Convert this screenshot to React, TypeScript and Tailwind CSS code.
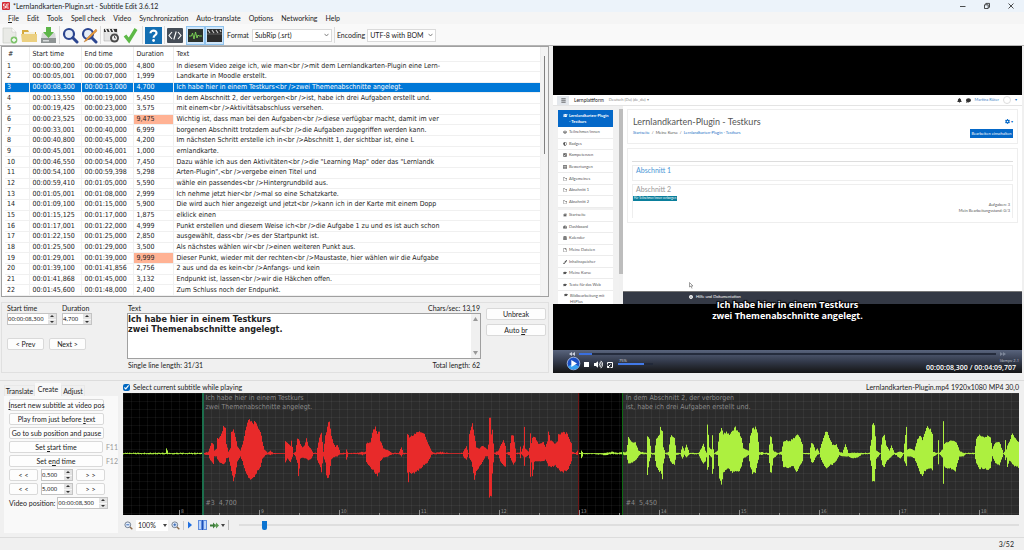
import React from "react";
import {
  FaGraduationCap, FaUsers, FaShieldAlt, FaCheckSquare, FaTable, FaRegFolder, FaHome, FaTachometerAlt,
  FaCalendarAlt, FaRegFile, FaPaintBrush, FaBell, FaComment, FaCog, FaBars, FaInfoCircle, FaVolumeUp,
} from "react-icons/fa";

type Row = [string, string, string, string];

const rows: Row[] = [
  ["00:00:00,200", "00:00:05,000", "4,800", "In diesem Video zeige ich, wie man<br />mit dem Lernlandkarten-Plugin eine Lern-"],
  ["00:00:05,001", "00:00:07,000", "1,999", "Landkarte in Moodle erstellt."],
  ["00:00:08,300", "00:00:13,000", "4,700", "Ich habe hier in einem Testkurs<br />zwei Themenabschnitte angelegt."],
  ["00:00:13,550", "00:00:19,000", "5,450", "In dem Abschnitt 2, der verborgen<br />ist, habe ich drei Aufgaben erstellt und."],
  ["00:00:19,425", "00:00:23,000", "3,575", "mit einem<br />Aktivitätsabschluss versehen."],
  ["00:00:23,525", "00:00:33,000", "9,475", "Wichtig ist, dass man bei den Aufgaben<br />diese verfügbar macht, damit im ver"],
  ["00:00:33,001", "00:00:40,000", "6,999", "borgenen Abschnitt trotzdem auf<br />die Aufgaben zugegriffen werden kann."],
  ["00:00:40,800", "00:00:45,000", "4,200", "Im nächsten Schritt erstelle ich in<br />Abschnitt 1, der sichtbar ist, eine L"],
  ["00:00:45,001", "00:00:46,001", "1,000", "ernlandkarte."],
  ["00:00:46,550", "00:00:54,000", "7,450", "Dazu wähle ich aus den Aktivitäten<br />die \"Learning Map\" oder das \"Lernlandk"],
  ["00:00:54,100", "00:00:59,398", "5,298", "Arten-Plugin\",<br />vergebe einen Titel und"],
  ["00:00:59,410", "00:01:05,000", "5,590", "wähle ein passendes<br />Hintergrundbild aus."],
  ["00:01:05,001", "00:01:08,000", "2,999", "Ich nehme jetzt hier<br />mal so eine Schatzkarte."],
  ["00:01:09,100", "00:01:15,000", "5,900", "Die wird auch hier angezeigt und jetzt<br />kann ich in der Karte mit einem Dopp"],
  ["00:01:15,125", "00:01:17,000", "1,875", "elklick einen"],
  ["00:01:17,001", "00:01:22,000", "4,999", "Punkt erstellen und diesem Weise ich<br />die Aufgabe 1 zu und es ist auch schon"],
  ["00:01:22,150", "00:01:25,000", "2,850", "ausgewählt, dass<br />es der Startpunkt ist."],
  ["00:01:25,500", "00:01:29,000", "3,500", "Als nächstes wählen wir<br />einen weiteren Punkt aus."],
  ["00:01:29,001", "00:01:39,000", "9,999", "Dieser Punkt, wieder mit der rechten<br />Maustaste, hier wählen wir die Aufgabe"],
  ["00:01:39,100", "00:01:41,856", "2,756", "2 aus und da es kein<br />Anfangs- und kein"],
  ["00:01:41,868", "00:01:45,000", "3,132", "Endpunkt ist, lassen<br />wir die Häkchen offen."],
  ["00:01:45,600", "00:01:48,000", "2,400", "Zum Schluss noch der Endpunkt."],
];

// Waveform envelope: x position, height above and below the centre line.
const envelope: number[] = [
  123,1,1, 150,1,1, 165,1,1, 166,5,1, 168,1,1, 185,1,1, 203,1,1, 208,2,2, 209,5,5, 211,11,8, 213,9,10, 214,3,3, 216,5,3,
  217,15,6, 219,16,9, 222,22,10, 223,27,11, 225,26,9, 226,10,5, 228,2,4, 230,5,12, 231,22,18, 233,24,28, 235,17,20, 237,7,8,
  240,3,3, 242,9,8, 244,18,15, 247,33,22, 249,35,26, 251,32,27, 254,31,23, 257,28,18, 260,22,13, 262,12,5, 264,4,3, 267,1,1,
  270,3,2, 273,1,1, 284,0,0, 285,12,9, 287,11,5, 290,8,9, 291,13,6, 293,1,1, 295,2,3, 297,16,10, 298,15,24, 300,10,5, 302,6,4,
  304,8,5, 306,15,5, 308,8,7, 311,4,5, 313,1,1, 316,1,1, 317,6,7, 320,20,14, 321,22,18, 323,2,3, 325,18,9, 326,22,22, 328,31,26,
  329,31,22, 330,24,12, 331,18,6, 333,10,4, 335,7,3, 337,9,3, 340,1,1, 345,1,1, 346,4,6, 348,1,1, 356,1,1, 362,2,2, 365,2,1,
  366,10,9, 370,12,14, 373,24,17, 375,26,20, 377,20,22, 379,22,19, 380,13,8, 383,5,4, 388,3,3, 392,1,1, 398,1,1, 401,6,3,
  403,1,1, 406,1,1, 407,19,20, 408,18,29, 409,16,20, 413,19,20, 419,22,16, 423,21,12, 427,12,9, 431,3,2, 434,1,1, 440,2,1,
  455,0,0, 462,1,1, 464,4,5, 466,7,6, 468,1,1, 469,20,5, 471,28,8, 472,32,14, 474,18,26, 476,6,18, 479,5,13, 482,8,9,
  485,6,3, 487,4,3, 488,9,6, 489,38,43, 490,35,43, 491,20,42, 492,24,20, 493,10,9, 494,1,1, 498,3,2, 500,8,8, 503,13,12,
  505,8,14, 506,1,1, 509,2,2, 511,18,7, 513,19,11, 515,5,8, 516,1,1, 519,1,1, 520,7,5, 521,2,1, 523,8,3, 524,26,12, 525,5,4,
  528,2,2, 529,6,5, 530,20,24, 531,11,9, 532,15,24, 534,17,8, 538,10,8, 543,11,8, 545,7,6, 547,12,10, 548,23,13, 550,13,14,
  555,10,12, 557,12,14, 558,20,16, 562,21,19, 567,20,17, 571,10,8, 572,2,1, 575,1,1, 577,3,2, 578,1,1, 580,1,1, 581,3,5,
  583,1,1, 592,0,1, 605,1,2, 612,2,1, 618,1,1, 626,2,2, 628,16,10, 630,13,10, 632,12,9, 635,11,7, 638,3,3, 641,2,1, 646,1,1,
  647,18,21, 649,15,8, 651,1,1, 654,1,2, 656,15,13, 659,18,19, 660,26,17, 662,22,26, 663,6,10, 665,1,1, 668,2,2, 670,17,8,
  672,18,11, 674,15,11, 676,1,2, 680,1,1, 682,7,5, 684,3,2, 686,9,4, 689,1,1, 698,1,1, 701,5,7, 703,10,10, 705,3,8, 706,1,4,
  707,30,17, 708,20,14, 709,6,2, 711,4,4, 712,18,20, 713,4,16, 714,1,1, 717,3,2, 719,20,24, 721,26,32, 723,20,20, 726,21,16,
  729,19,16, 732,23,19, 735,26,18, 738,22,19, 741,16,13, 743,5,5, 748,3,2, 750,18,14, 752,25,20, 755,26,19, 757,21,10,
  759,2,2, 765,1,1, 768,1,2, 770,18,18, 771,17,20, 773,3,5, 778,1,1, 781,2,2, 783,12,13, 787,13,14, 790,13,14, 793,15,13,
  796,19,19, 799,17,13, 802,9,8, 803,1,1, 809,1,1, 811,11,9, 813,9,9, 815,3,4, 817,5,2, 819,1,1, 821,10,7, 823,16,11,
  826,23,16, 829,16,12, 832,9,11, 836,9,7, 839,2,2, 842,1,3, 845,9,3, 848,1,3, 852,1,5, 857,1,4, 862,1,1, 869,1,1, 871,14,13,
  872,30,28, 874,30,28, 876,3,5, 880,1,1, 882,17,12, 884,18,13, 886,8,8, 889,3,5, 891,8,3, 894,1,1, 900,2,5, 903,1,1,
  904,10,8, 906,27,12, 907,4,3, 910,5,3, 914,3,5, 917,15,12, 920,18,21, 922,13,22, 924,20,18, 926,27,16, 930,25,15, 932,20,16,
  933,2,3, 937,1,1, 938,13,11, 939,1,1, 942,4,4, 943,33,32, 944,10,14, 950,13,15, 955,12,18, 957,9,10, 959,3,3, 963,1,3,
  966,1,1, 974,1,1, 976,15,10, 979,18,15, 983,16,15, 988,18,16, 990,16,14, 992,5,3, 995,11,10, 999,12,12, 1001,6,6, 1003,1,1,
  1004,2,2, 1005,13,7, 1006,4,4, 1007,8,14, 1009,12,7, 1012,21,11, 1014,17,13, 1019,10,14,
];

function wavePath(from: number, to: number): string {
  let d = "";
  let k = 0;
  for (let x = from; x < to; x++) {
    while (k + 3 < envelope.length - 3 && envelope[k + 3] <= x) k += 3;
    const t = Math.min(1, Math.max(0, (x - envelope[k]) / (envelope[k + 3] - envelope[k])));
    const n = Math.abs(Math.sin(x * 12.9898) * 43758.5453) % 1;
    const m = Math.abs(Math.sin(x * 78.233) * 12543.123) % 1;
    const up = envelope[k + 1] * (1 - t) + envelope[k + 4] * t;
    const down = envelope[k + 2] * (1 - t) + envelope[k + 5] * t;
    const top = Math.max(0.4, up * (0.93 + n * 0.12) - (up < 3 ? 0.7 - n * 0.6 : 0));
    const bottom = Math.max(0.4, down * (0.93 + m * 0.12) - (down < 3 ? 0.7 - m * 0.6 : 0));
    d += `M${x - 122.5} ${(60.5 - top).toFixed(1)}V${(60.5 + bottom).toFixed(1)}`;
  }
  return d;
}

const openSans = "font-['Open_Sans','Noto_Sans',sans-serif]";
const lato = "font-['Lato','Open_Sans',sans-serif]";
const tahoma = "font-['DejaVu_Sans_Condensed','DejaVu_Sans',sans-serif]";

function Btn({ children, className = "" }: { children: React.ReactNode; className?: string }) {
  return (
    <button className={`flex h-[12px] items-center justify-center whitespace-nowrap rounded-[2px] border border-[#d9d9d9] bg-[#fdfdfd] leading-none ${className}`}>
      <span>{children}</span>
    </button>
  );
}

function Spin({ value, label, className = "" }: { value: string; label: string; className?: string }) {
  return (
    <div className={`flex h-[12px] border border-[#c4c4c4] bg-white ${className}`}>
      <input aria-label={label} defaultValue={value} className={`w-0 min-w-0 flex-1 bg-transparent text-[6px] leading-none text-black outline-none ${openSans}`} />
      <div className="flex w-[8px] flex-col bg-[#e3e3e3]">
        <button aria-label={`${label} up`} className="flex flex-1 items-center justify-center">
          <svg width="4" height="2" viewBox="0 0 4 2"><path d="M0 2L2 0L4 2Z" fill="#333" /></svg>
        </button>
        <button aria-label={`${label} down`} className="flex flex-1 items-center justify-center border-t border-[#f6f6f6]">
          <svg width="4" height="2" viewBox="0 0 4 2"><path d="M0 0L2 2L4 0Z" fill="#333" /></svg>
        </button>
      </div>
    </div>
  );
}

function Sep() {
  return <span className="h-[18px] w-px shrink-0 bg-[#dcdcdc]" />;
}

function Tool({ label, children, on = false }: { label: string; children: React.ReactNode; on?: boolean }) {
  return (
    <button aria-label={label} className={`flex h-[19px] shrink-0 items-center justify-center ${on ? "w-[19px] border border-[#8fc3ee] bg-[#cfe6fa]" : "w-[17px]"}`}>
      <svg width="17" height="17" viewBox="0 0 17 17">{children}</svg>
    </button>
  );
}

function TitleBar() {
  return (
    <header className="flex h-[12px] items-center bg-[#ecf3fa] pl-[2px]">
      <svg width="8" height="8" viewBox="0 0 16 16">
        <rect width="16" height="16" rx="2" fill="#d32a35" />
        <path d="M7 4H3V8H7V12H2.5M14 4H9.5V12H14M9.5 8H13" fill="none" stroke="#fff" strokeWidth="1.6" />
      </svg>
      <h1 className="ml-[3px] flex-1 whitespace-nowrap leading-none">*Lernlandkarten-Plugin.srt - Subtitle Edit 3.6.12</h1>
      <div className="flex items-center gap-[16px] pr-[9px]">
        <button aria-label="Minimize"><svg width="8" height="8" viewBox="0 0 8 8"><path d="M1 4.500H6.500" stroke="#222" strokeWidth=".8" /></svg></button>
        <button aria-label="Restore"><svg width="8" height="8" viewBox="0 0 8 8"><path d="M1.500 2.800H5.200V6.500H1.500ZM2.800 2.500V1.400H6.500V5.300H5.500" fill="none" stroke="#222" strokeWidth=".8" /></svg></button>
        <button aria-label="Close"><svg width="8" height="8" viewBox="0 0 8 8"><path d="M1.500 1.500L6.500 6.500M6.500 1.500L1.500 6.500" stroke="#222" strokeWidth=".8" /></svg></button>
      </div>
    </header>
  );
}

function MenuBar() {
  return (
    <nav className="flex h-[12px] items-center gap-[8px] bg-[#f5f5f5] pl-[8px] leading-none">
      <button><u>F</u>ile</button>
      {["Edit", "Tools", "Spell check", "Video", "Synchronization", "Auto-translate", "Options", "Networking", "Help"].map((m) => (
        <button key={m} className="whitespace-nowrap">{m}</button>
      ))}
    </nav>
  );
}

function ToolBar() {
  return (
    <div className="flex h-[22px] items-center border-b border-[#b5b5b5] bg-[#f9f9f9] pl-[2px] pt-[1px]">
      <div className="flex items-center gap-[2px]">
        <Tool label="New">
          <path d="M1 1H10L14 5V16H1Z" fill="#e9eae6" stroke="#c4c6c0" strokeWidth=".6" />
          <path d="M10 1V5H14" fill="#fff" stroke="#c4c6c0" strokeWidth=".5" />
          <circle cx="12" cy="13" r="3.400" fill="#7fc46c" />
          <path d="M12 11V15M10 13H14" stroke="#fff" strokeWidth="1.300" />
        </Tool>
        <Tool label="Open">
          <path d="M1 3H7L8 5H15V15H1Z" fill="#d5a93d" />
          <path d="M3 5H14V9H3Z" fill="#f4f0df" />
          <path d="M0 7H16L16 15H1Z" fill="#ecd080" />
        </Tool>
        <Tool label="Save">
          <path d="M2 6H15L16 12H1Z" fill="#d6d8d8" />
          <path d="M1 11H16V16H1Z" fill="#8e9494" />
          <path d="M3 13H9V14.500H3Z" fill="#d9dddd" />
          <path d="M6 0H11V5H14L8.500 11L3 5H6Z" fill="#5cb548" />
        </Tool>
      </div>
      <div className="ml-[2px] flex items-center gap-[2px]">
        <Sep />
        <Tool label="Find">
          <circle cx="7" cy="7" r="5" fill="#e6edf7" stroke="#2b4590" strokeWidth="2.200" />
          <path d="M10.800 10.800L15 15" stroke="#2b4590" strokeWidth="3" strokeLinecap="round" />
        </Tool>
        <Tool label="Replace">
          <circle cx="7" cy="7" r="5" fill="#e6edf7" stroke="#2b4590" strokeWidth="2.200" />
          <path d="M10.800 10.800L15 15" stroke="#2b4590" strokeWidth="3" strokeLinecap="round" />
          <path d="M15 2L5 12L3 15L6 13.500L16 4Z" fill="#e79a3c" stroke="#a8682a" strokeWidth=".4" />
        </Tool>
        <Sep />
        <Tool label="Visual sync">
          <path d="M1 2H14V14H1Z" fill="#e4e4e4" stroke="#a5a5a5" strokeWidth=".5" />
          <path d="M1 2H14V5H1Z" fill="#333" />
          <path d="M2.500 2L4 5M6 2L7.500 5M9.500 2L11 5" stroke="#f5f5f5" strokeWidth="1.500" />
          <circle cx="11.500" cy="11" r="4.500" fill="#4a4a4a" />
          <circle cx="11.500" cy="11" r="2.500" fill="#f0f0f0" />
          <path d="M11.500 9V11H13" stroke="#333" fill="none" strokeWidth=".8" />
        </Tool>
        <Tool label="Fix common errors">
          <path d="M3 8.500L7 13.500L14 2" fill="none" stroke="#5db947" strokeWidth="3.400" />
        </Tool>
      </div>
      <div className="ml-[3px] flex items-center gap-[2px]">
        <Sep />
        <Tool label="Help">
          <rect width="17" height="17" fill="#136fb3" />
          <path d="M5.500 6.300C5.500 2.600 11.700 2.800 11.500 6.200C11.400 8.200 8.600 8.400 8.600 10.700" fill="none" stroke="#fff" strokeWidth="2.200" />
          <circle cx="8.600" cy="13.500" r="1.400" fill="#fff" />
        </Tool>
        <Sep />
        <Tool label="Source view">
          <rect y="1" width="16" height="15" rx="1" fill="#454d57" />
          <path d="M5 5L2 8.500L5 12M11 5L14 8.500L11 12M9.200 4.500L6.800 12.500" fill="none" stroke="#fff" strokeWidth="1.100" />
        </Tool>
        <div className="flex">
          <Tool label="Toggle waveform" on>
            <rect x="1" y="2" width="15" height="13" fill="#2c322c" />
            <path d="M2 9H4.500L5.500 6L7 12L8.500 5L10 11L11 8L12 9H15" fill="none" stroke="#7ed957" strokeWidth=".9" />
          </Tool>
          <Tool label="Toggle video" on>
            <rect x="1" y="2" width="15" height="13" fill="#2d2d2d" />
            <path d="M2 3L4 6M6 3L8 6M10 3L12 6M14 3L15 5" stroke="#c8c8c8" strokeWidth="1.200" />
            <path d="M1 7H16" stroke="#8b8b8b" strokeWidth=".6" />
          </Tool>
        </div>
      </div>
      <label className="ml-[3px] flex items-center gap-[3px] whitespace-nowrap">
        Format
        <span className="flex h-[13px] w-[80px] items-center border border-[#dadada] bg-white px-[2px]">
          <select className="min-w-0 flex-1 appearance-none bg-transparent leading-none outline-none"><option>SubRip (.srt)</option></select>
          <Chevron />
        </span>
      </label>
      <span className="ml-[2px] mr-[2px] h-[16px] w-px bg-[#dcdcdc]" />
      <label className="flex items-center gap-[2px] whitespace-nowrap">
        Encoding
        <span className="flex h-[13px] w-[69px] items-center border border-[#dadada] bg-white px-[2px]">
          <select className="min-w-0 flex-1 appearance-none bg-transparent leading-none outline-none"><option>UTF-8 with BOM</option></select>
          <Chevron />
        </span>
      </label>
    </div>
  );
}

function Chevron() {
  return <svg width="5" height="4" viewBox="0 0 5 4" className="shrink-0"><path d="M.5 .8L2.500 3L4.500 .8" fill="none" stroke="#666" strokeWidth=".8" /></svg>;
}

function SubtitleList() {
  return (
    <section className={`flex border border-[#a0a0a0] bg-white pl-[3px] text-[7px] ${tahoma}`}>
      <table className="h-[249px] min-w-0 flex-1 table-fixed border-collapse text-left leading-none">
        <colgroup>
          <col className="w-[24px]" /><col className="w-[52px]" /><col className="w-[52px]" /><col className="w-[40px]" /><col />
        </colgroup>
        <thead>
          <tr className="h-[14px]">
            {["#", "Start time", "End time", "Duration", "Text"].map((h) => (
              <th key={h} className="whitespace-nowrap border-r border-[#ececec] px-[3px] pb-0 pt-[2px] font-normal">{h}</th>
            ))}
          </tr>
        </thead>
        <tbody>
          {rows.map((r, i) => (
            <tr key={i} className={i === 2 ? "bg-[#0078d7] text-white" : ""}>
              <td className="border border-[#f0f0f0] border-l-0 px-[2px] py-0">{i + 1}</td>
              <td className="border border-[#f0f0f0] px-[3px] py-0">{r[0]}</td>
              <td className="border border-[#f0f0f0] px-[3px] py-0">{r[1]}</td>
              <td className={`border border-[#f0f0f0] px-[3px] py-0 ${i === 5 || i === 18 ? "bg-[#ffb294]" : ""}`}>{r[2]}</td>
              <td className="whitespace-nowrap border border-[#f0f0f0] px-[3px] py-0">{r[3]}</td>
            </tr>
          ))}
        </tbody>
      </table>
      <div className="flex w-[7px] justify-center bg-[#f3f3f3] pt-[9px]">
        <span className="h-[98px] w-px bg-[#808080]" />
      </div>
    </section>
  );
}

function EditPanel() {
  return (
    <section className="flex gap-[5px] border border-[#e0e0e0] py-[1px] pl-[5px] pr-[2px]">
      <div className="w-[115px]">
        <div className="flex gap-[5px]">
          <div className="w-[50px]"><div className="h-[9px]">Start time</div><Spin label="Start time" value="00:00:08,300" /></div>
          <div className="w-[30px]"><div className="h-[9px]">Duration</div><Spin label="Duration" value="4,700" /></div>
        </div>
        <div className="mt-[13px] flex gap-[5px]">
          <Btn className="w-[37px]">&lt; Prev</Btn>
          <Btn className="w-[37px]">Next &gt;</Btn>
        </div>
      </div>
      <div className="min-w-0 flex-1">
        <div className="flex h-[9px] justify-between px-[1px]"><label htmlFor="subtitle-text">Text</label><span>Chars/sec: 13,19</span></div>
        <div className="flex h-[46px] border border-[#a0a0a0] bg-white">
          <textarea id="subtitle-text" defaultValue={"Ich habe hier in einem Testkurs\nzwei Themenabschnitte angelegt."} className={`min-w-0 flex-1 resize-none overflow-hidden text-[9px] font-bold leading-[10px] outline-none ${tahoma}`} />
          <div className="flex w-[9px] flex-col items-center justify-between bg-[#f0f0f0] py-[3px]">
            <svg width="5" height="4" viewBox="0 0 5 4"><path d="M0 4L2.500 0L5 4Z" fill="#999" /></svg>
            <svg width="5" height="4" viewBox="0 0 5 4"><path d="M0 0L2.500 4L5 0Z" fill="#999" /></svg>
          </div>
        </div>
        <div className="flex h-[12px] items-center justify-between px-[1px]"><span>Single line length: 31/31</span><span>Total length: 62</span></div>
      </div>
      <div className="flex w-[60px] flex-col gap-[4px] pt-[4px]">
        <Btn>Unbreak</Btn>
        <Btn>Auto <u>b</u>r</Btn>
      </div>
    </section>
  );
}

const nav1: [React.ReactNode, string][] = [
  [<FaUsers />, "Teilnehmer/innen"], [<FaShieldAlt />, "Badges"], [<FaCheckSquare />, "Kompetenzen"], [<FaTable />, "Bewertungen"],
  [<FaRegFolder />, "Allgemeines"], [<FaRegFolder />, "Abschnitt 1"], [<FaRegFolder />, "Abschnitt 2"],
];
const nav2: [React.ReactNode, string][] = [
  [<FaHome />, "Startseite"], [<FaTachometerAlt />, "Dashboard"], [<FaCalendarAlt />, "Kalender"], [<FaRegFile />, "Meine Dateien"],
  [<FaPaintBrush />, "Inhaltsspeicher"], [<FaGraduationCap />, "Meine Kurse"], [<FaGraduationCap />, "Texte für das Web"],
];

function NavItem({ icon, text }: { icon: React.ReactNode; text: string }) {
  return (
    <li className="flex flex-1 items-center gap-[2px] border-b border-[#ececec] pl-[5px]">
      {icon}<span className="whitespace-nowrap">{text}</span>
    </li>
  );
}

function MoodlePage() {
  return (
    <div className={`flex h-[209px] flex-col overflow-hidden bg-white text-[5px] leading-none text-[#555] ${lato}`}>
      <div className="flex h-[11px] shrink-0 items-center border-b border-[#e4e4e4] pl-[4px] pr-[5px]">
        <span className="flex h-[9px] w-[12px] items-center justify-center bg-[#e3e7ec] text-[#333]"><FaBars /></span>
        <span className="ml-[5px] text-[5px] text-[#222]">Lernplattform</span>
        <span className="ml-[5px] flex-1 text-[4px] text-[#888]">Deutsch (Du) (de_du) ▾</span>
        <span className="flex items-center gap-[4px] text-[#333]"><FaBell /><FaComment /><span className="text-[4px] text-[#3d7fc4]">Martina Rüter</span><span className="h-[8px] w-[8px] rounded-full border border-[#ddd]" /><span className="text-[4px] text-[#1a6fc4]">▾</span></span>
      </div>
      <div className="flex min-h-0 flex-1">
        <div className="flex w-[66px] shrink-0 flex-col overflow-hidden bg-[#f1f1f1] pl-[5px] pr-[6px] pt-[4px]">
          <div className="flex h-[17px] shrink-0 items-start gap-[1px] bg-[#0468c8] pl-[5px] pt-[3px] text-[4px] font-bold leading-[6px] text-white"><FaGraduationCap className="shrink-0 text-[5px]" /><span className="whitespace-nowrap">Lernlandkarten-Plugin<br />- Testkurs</span></div>
          <ul className="flex h-[81px] shrink-0 flex-col bg-white text-[4px]">{nav1.map(([i, t]) => <NavItem key={t} icon={i} text={t} />)}</ul>
          <ul className="mt-[2px] flex h-[81px] shrink-0 flex-col bg-white text-[4px]">{nav2.map(([i, t]) => <NavItem key={t} icon={i} text={t} />)}</ul>
          <div className="flex flex-1 gap-[2px] bg-white pl-[6px] pt-[2px] text-[4px] leading-[6px]"><FaGraduationCap /><span className="whitespace-nowrap">Bildbearbeitung mit<br />H5Plus</span></div>
        </div>
        <div className="w-[4px] shrink-0 bg-[#f0f0f0] pt-[3px]"><div className="h-[165px] bg-[#bdbdbd]" /></div>
        <div className="flex min-w-0 flex-1 flex-col">
          <div className="flex flex-1 flex-col gap-[4px] px-[4px] pt-[3px]">
            <div className="flex h-[35px] justify-between border border-[#eeeeee] pl-[5px] pr-[4px] pt-[7px]">
              <div>
                <h2 className="whitespace-nowrap text-[9px] font-normal leading-[10px] text-[#555]">Lernlandkarten-Plugin - Testkurs</h2>
                <p className="mt-[4px] whitespace-nowrap text-[4px] text-[#1a6fc4]">Startseite <span className="text-[#555]">&nbsp;/&nbsp; Meine Kurse &nbsp;/&nbsp;</span> Lernlandkarten-Plugin - Testkurs</p>
              </div>
              <div className="flex flex-col items-end gap-[5px] pt-[2px]">
                <span className="flex items-center gap-[1px] text-[#0468c8]"><FaCog /><span className="text-[4px]">▾</span></span>
                <button className="flex h-[9px] w-[43px] items-center justify-center whitespace-nowrap bg-[#0468c8] text-[4px] text-white">Bearbeiten einschalten</button>
              </div>
            </div>
            <div className="h-[75px] border border-[#eeeeee] px-[4px]">
              <div className="h-[13px] border-b border-[#dddddd]" />
              <h3 className="mt-[3px] h-[16px] border border-[#eeeeee] pl-[3px] pt-[1px] text-[7px] text-[#4a97d6]">Abschnitt 1</h3>
              <div className="mt-[3px] flex h-[34px] justify-between border border-b-0 border-[#eeeeee]">
                <div>
                  <h3 className="pl-[3px] pt-[1px] text-[7px] text-[#999]">Abschnitt 2</h3>
                  <span className="mt-[3px] flex h-[5px] items-center justify-center whitespace-nowrap bg-[#0a7f9c] px-[1px] text-[3px] text-white">Für Teilnehmer/innen verborgen</span>
                </div>
                <div className="pr-[2px] pt-[17px] text-right text-[4px] leading-[6px]">Aufgaben: 3<br />Mein Bearbeitungsstand: 0/3</div>
              </div>
            </div>
            <svg width="5" height="7" viewBox="0 0 5 7" className="ml-[62px] mt-[55px]"><path d="M.5 .5V5L2 4L3 6.500M.5 .5L4 4H2" fill="none" stroke="#777" strokeWidth=".7" /></svg>
          </div>
          <div className="flex h-[13px] shrink-0 items-start gap-[3px] border-t border-[#777] bg-[#343945] pl-[66px] pt-[3px] text-[4px] text-white"><FaInfoCircle />Hilfe und Dokumentation</div>
        </div>
      </div>
    </div>
  );
}

function VideoPanel() {
  return (
    <section className={`relative flex flex-col bg-black pt-[49px] ${openSans}`}>
      <MoodlePage />
      <p className="absolute inset-x-0 top-[253px] text-center text-[9px] font-bold leading-[11px] text-white [text-shadow:1px_1px_1px_#000,-1px_-1px_1px_#000,1px_-1px_1px_#000,-1px_1px_1px_#000]">
        Ich habe hier in einem Testkurs<br />zwei Themenabschnitte angelegt.
      </p>
      <div className="mt-auto flex flex-col bg-gradient-to-b from-[#59647d] via-[#333a4b] to-[#151515] leading-none text-white">
        <div className="flex h-[7px] items-center gap-[4px] pl-[16px] pr-[16px] text-[#ddd]">
          <svg width="6" height="4" viewBox="0 0 6 4"><path d="M3 0V4L0 2ZM6 0V4L3 2Z" fill="#c9cfdd" /></svg>
          <input type="range" aria-label="Position" defaultValue="3" className="h-[2px] min-w-0 flex-1 appearance-none bg-[linear-gradient(90deg,#3a6fe0_3%,#252c3d_3%)] [&::-webkit-slider-thumb]:h-0 [&::-webkit-slider-thumb]:w-0 [&::-webkit-slider-thumb]:appearance-none" />
          <svg width="6" height="4" viewBox="0 0 6 4"><path d="M0 0V4L3 2ZM3 0V4L6 2Z" fill="#7d8699" /></svg>
        </div>
        <div className="flex h-[16px] items-start pl-[13px]">
          <button aria-label="Play" className="-mt-px">
            <svg width="15" height="15" viewBox="0 0 15 15"><circle cx="7.500" cy="7.500" r="6.300" fill="#1b4fc4" stroke="#b9cdf2" strokeWidth=".8" /><path d="M2 10.500A6 5 0 0 0 13 10.500A7 5 0 0 0 2 10.500Z" fill="#39a0f0" /><path d="M5.300 4V11L11 7.500Z" fill="#fff" /></svg>
          </button>
          <button aria-label="Stop" className="ml-[3px] mt-[5px] h-[5px] w-[5px] bg-white" />
          <button aria-label="Mute" className="ml-[5px] mt-[3px] text-[9px]"><FaVolumeUp /></button>
          <button aria-label="Fullscreen" className="ml-[4px] mt-[5px]"><svg width="6" height="6" viewBox="0 0 6 6"><path d="M.5 2.500V.5H5.500V5.500H3.500M.5 5.500L3.500 2.500M.5 3.500V5.500H2.500" fill="none" stroke="#fff" /></svg></button>
          <div className="ml-[5px] w-[35px] pt-[2px]">
            <div className="pl-[1px] text-[4px] text-[#ddd]">75%</div>
            <input type="range" aria-label="Volume" defaultValue="75" className="block h-[2px] w-full appearance-none bg-[linear-gradient(90deg,#4279e8_75%,#222939_75%)] [&::-webkit-slider-thumb]:h-0 [&::-webkit-slider-thumb]:w-0 [&::-webkit-slider-thumb]:appearance-none" />
          </div>
          <div className="ml-auto flex flex-col items-end pr-[3px] pt-[2px]">
            <span className="text-[4px] text-[#c5cad6]">libmpv 2.1</span>
            <span className="mt-[1px] pr-[3px] text-[7px] font-semibold">00:00:08,300 / 00:04:09,707</span>
          </div>
        </div>
      </div>
    </section>
  );
}

function CreateTabs() {
  return (
    <div className="flex w-[114px] shrink-0 flex-col pt-[2px]">
      <div className="flex items-end leading-none">
        <button className="h-[11px] w-[31px] border border-b-0 border-[#e8e8e8]">Translate</button>
        <button className="h-[13px] w-[26px] bg-[#f9f9f9]">Create</button>
        <button className="h-[11px] w-[24px] border border-b-0 border-[#e8e8e8]">Adjust</button>
      </div>
      <div className="flex flex-1 flex-col gap-[2px] bg-[#f9f9f9] pl-[5px] pt-[3px]">
        <Btn className="w-[95px]"><u>I</u>nsert new subtitle at video pos</Btn>
        <Btn className="w-[95px]">Play from just before <u>t</u>ext</Btn>
        <Btn className="w-[95px]">Go to sub position and pause</Btn>
        <div className="flex items-center gap-[3px]"><Btn className="w-[95px]">Set <u>s</u>tart time</Btn><span className="text-[#999]">F11</span></div>
        <div className="flex items-center gap-[3px]"><Btn className="w-[95px]">Set e<u>n</u>d time</Btn><span className="text-[#999]">F12</span></div>
        <div className="flex gap-[3px]"><Btn className="w-[29px]">&lt; &lt;</Btn><Spin label="Short step" value="0,500" className="w-[32px]" /><Btn className="w-[29px]">&gt; &gt;</Btn></div>
        <div className="flex gap-[3px]"><Btn className="w-[29px]">&lt; &lt;</Btn><Spin label="Long step" value="5,000" className="w-[32px]" /><Btn className="w-[29px]">&gt; &gt;</Btn></div>
        <div className="flex items-center gap-[2px] whitespace-nowrap">Video position:<Spin label="Video position" value="00:00:08,300" className="w-[51px]" /></div>
      </div>
    </div>
  );
}

const seconds = [8, 9, 10, 11, 12, 13, 14, 15, 16, 17, 18];

function Waveform() {
  return (
    <div className={`relative h-[122px] bg-black text-[7px] leading-[9px] text-[#8a8a8a] ${tahoma}`}>
      <svg className="block h-full w-full" viewBox="0 0 896 122" preserveAspectRatio="none">
        <rect x="81" width="375" height="122" fill="#2b2b2b" />
        <rect x="500" width="396" height="122" fill="#2b2b2b" />
        <path d={Array.from({ length: 112 }, (_, i) => `M${i * 8 + 0.5} 0V122`).join("") + Array.from({ length: 16 }, (_, i) => `M0 ${i * 8 + 0.5}H896`).join("")} stroke="#fff" strokeOpacity=".05" fill="none" />
        <path d={wavePath(123, 203) + wavePath(578, 1019)} stroke="#adf03f" fill="none" />
        <path d={wavePath(203, 578)} stroke="#e82a2a" fill="none" />
        <rect x="79" width="2" height="122" fill="#1c6e4c" />
        <rect x="455" width="1" height="122" fill="#6e1616" />
        <rect x="499" width="1" height="122" fill="#0d6a12" />
        <path d={seconds.map((_, i) => `M${i * 80 + 56.5} 117V122M${i * 80 + 96.5} 120V122`).join("")} stroke="#8f8f8f" fill="none" />
      </svg>
      {seconds.map((s, i) => (
        <span key={s} className="absolute bottom-0 text-[5px] leading-[7px] text-[#999]" style={{ left: `${((58 + i * 80) / 896) * 100}%` }}>{s}</span>
      ))}
      <p className="absolute left-[9.2%] top-[1px] whitespace-nowrap">Ich habe hier in einem Testkurs<br />zwei Themenabschnitte angelegt.</p>
      <p className="absolute left-[56.1%] top-[1px] whitespace-nowrap">In dem Abschnitt 2, der verborgen<br />ist, habe ich drei Aufgaben erstellt und.</p>
      <span className="absolute bottom-[7px] left-[9.2%] whitespace-pre">#3  4,700</span>
      <span className="absolute bottom-[7px] left-[56.1%] whitespace-pre">#4  5,450</span>
    </div>
  );
}

function Lens({ plus = false }: { plus?: boolean }) {
  return (
    <svg width="9" height="9" viewBox="0 0 9 9">
      <circle cx="3.800" cy="3.800" r="2.900" fill="#e4eefb" stroke="#6b7789" strokeWidth=".9" />
      <path d={plus ? "M2.300 3.800H5.300M3.800 2.300V5.300" : "M2.300 3.800H5.300"} stroke="#2a5db0" strokeWidth=".9" />
      <path d="M6 6L8.300 8.300" stroke="#8a6a4a" strokeWidth="1.400" />
    </svg>
  );
}

function WaveControls() {
  return (
    <div className="flex h-[18px] items-center pl-[1px] pt-[2px] leading-none">
      <button aria-label="Zoom out"><Lens /></button>
      <span className="ml-[3px] flex h-[11px] w-[32px] items-center bg-white pl-[2px] pr-[1px]">
        <select aria-label="Zoom" className="min-w-0 flex-1 appearance-none bg-transparent outline-none"><option>100%</option></select>
        <svg width="4" height="3" viewBox="0 0 4 3"><path d="M0 0H4L2 3Z" fill="#444" /></svg>
      </span>
      <button aria-label="Zoom in" className="ml-[3px]"><Lens plus /></button>
      <span className="ml-[3px] h-[9px] w-px bg-[#ccc]" />
      <button aria-label="Play selection" className="ml-[4px]"><svg width="5" height="8" viewBox="0 0 5 8"><path d="M0 0.500L4 4L0 7.500Z" fill="#1f6fe0" /></svg></button>
      <button aria-label="Center" className="ml-[5px]"><svg width="9" height="10" viewBox="0 0 9 10"><rect width="9" height="10" fill="#5f8bdc" /><path d="M1 1H3V9H1ZM6 1H8V9H6Z" fill="#bcd5fb" /><path d="M4.500 0V10" stroke="#1d4fb8" /></svg></button>
      <button aria-label="Speed" className="ml-[3px] flex items-center gap-[2px]">
        <svg width="9" height="7" viewBox="0 0 9 7"><path d="M0 2.500H3V.5L6 3.500L3 6.500V4.500H0Z" fill="#3c7a3a" /><path d="M4 2.500H6V.5L9 3.500L6 6.500V4.500H5Z" fill="#5a9a52" /></svg>
        <svg width="4" height="3" viewBox="0 0 4 3"><path d="M0 0H4L2 3Z" fill="#444" /></svg>
      </button>
      <span className="ml-[3px] h-[10px] w-px bg-[#bbb]" />
      <input type="range" aria-label="Waveform position" defaultValue="3" className="ml-[10px] h-[10px] min-w-0 flex-1 appearance-none bg-[linear-gradient(#dedede,#dedede)] bg-[length:100%_2px] bg-center bg-no-repeat [&::-webkit-slider-thumb]:h-[9px] [&::-webkit-slider-thumb]:w-[5px] [&::-webkit-slider-thumb]:appearance-none [&::-webkit-slider-thumb]:rounded-b-[2px] [&::-webkit-slider-thumb]:bg-[#0b74d1]" />
    </div>
  );
}

export default function App() {
  return (
    <div className={`flex min-h-screen flex-col bg-[#f0f0f0] text-[7px] leading-[9px] text-[#222] ${lato}`}>
      <TitleBar />
      <MenuBar />
      <ToolBar />
      <main className="flex flex-1 flex-col gap-[7px]">
        <div className="grid grid-cols-[549fr_469fr] gap-[4px] pr-[2px]">
          <div className="flex min-w-0 flex-col gap-[5px] pl-[1px]">
            <SubtitleList />
            <EditPanel />
          </div>
          <VideoPanel />
        </div>
        <section className="flex flex-1 gap-[5px] border-y border-[#dcdcdc] pb-[4px] pl-[4px] pr-[5px]">
          <CreateTabs />
          <div className="min-w-0 flex-1">
            <div className="flex h-[12px] items-center justify-between">
              <label className="flex items-center gap-[3px]">
                <input type="checkbox" defaultChecked className="h-[7px] w-[7px] accent-[#0067c0]" />
                Select current subtitle while playing
              </label>
              <span>Lernlandkarten-Plugin.mp4 1920x1080 MP4 30,0</span>
            </div>
            <Waveform />
            <WaveControls />
          </div>
        </section>
      </main>
      <footer className="flex h-[12px] items-center justify-end pr-[10px] leading-none">3/52</footer>
    </div>
  );
}
